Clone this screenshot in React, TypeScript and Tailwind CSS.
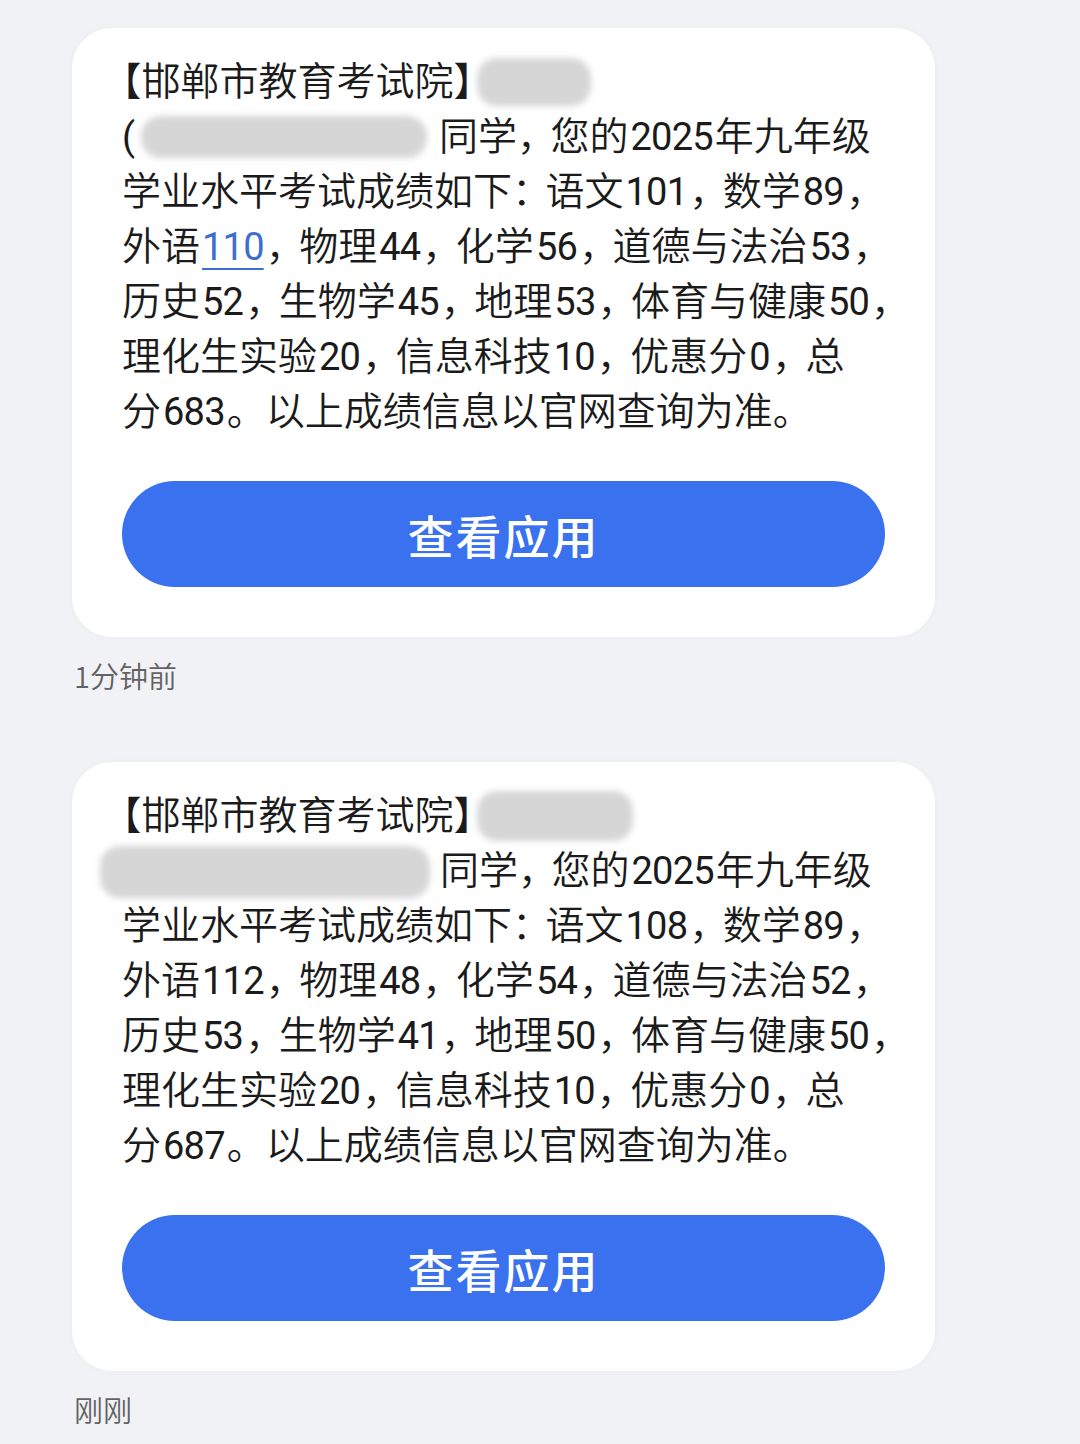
import React from 'react';

// digit runs get the latin face, full-width punctuation uses half-width glyphs plus a gap
const T: React.FC<{ s: string }> = ({ s }) => (
  <>
    {s.split(/(\d+|[，：])/).map((part, i) => {
      if (/^\d+$/.test(part))
        return (
          <span key={i} className="mx-[2px] font-['Roboto'] text-[38px] font-normal tracking-[-0.8px]">
            {part}
          </span>
        );
      if (part === '，' || part === '：')
        return (
          <span key={i} className="mr-[14px] [font-feature-settings:'halt']">
            {part}
          </span>
        );
      return <span key={i}>{part}</span>;
    })}
  </>
);

const Blob: React.FC<{ className: string }> = ({ className }) => (
  <span className={`inline-block rounded-[20px] bg-[#d6d6d6] align-middle blur-[3px] ${className}`} />
);

const MessageCard: React.FC<{ lines: React.ReactNode[]; time: string }> = ({ lines, time }) => (
  <div>
    <div className="mx-[72px] w-[863px] rounded-[40px] bg-white px-[50px] pb-[50px] pt-[23px] shadow-[0_0_6px_rgba(0,0,0,0.03)]">
      <div className="text-[39px] leading-[55px] text-[#1b1b1b]">
        {lines.map((line, i) => (
          <div key={i} className="h-[55px] whitespace-nowrap">
            {line}
          </div>
        ))}
      </div>
      <button className="mt-[45px] flex h-[106px] w-full items-center justify-center rounded-full bg-[#3a71ef] text-[46px] font-medium tracking-[2px] text-white">
        查看应用
      </button>
    </div>
    <div className="ml-[74px] mt-[20px] text-[29px] leading-[36px] text-[#626262]">{time}</div>
  </div>
);

const Header: React.FC<{ blob: string }> = ({ blob }) => (
  <>
    <span className="[font-feature-settings:'halt']">【</span>
    邯郸市教育考试院
    <span className="[font-feature-settings:'halt']">】</span>
    <Blob className={blob} />
  </>
);

const first: React.ReactNode[] = [
  <Header blob="ml-[4px] -mt-[4px] h-[48px] w-[114px]" />,
  <>
    <span className="font-['Roboto'] text-[38px] font-normal">(</span>
    <Blob className="-mt-[4px] ml-[6px] mr-[12px] h-[42px] w-[286px]" />
    <T s="同学，您的2025年九年级" />
  </>,
  <T s="学业水平考试成绩如下：语文101，数学89，" />,
  <>
    <T s="外语" />
    <span className="mx-[2px] font-['Roboto'] text-[38px] font-normal tracking-[-0.8px] text-[#3c6ed2] underline decoration-[2px] underline-offset-[8px]">
      110
    </span>
    <T s="，物理44，化学56，道德与法治53，" />
  </>,
  <T s="历史52，生物学45，地理53，体育与健康50，" />,
  <T s="理化生实验20，信息科技10，优惠分0，总" />,
  <T s="分683。以上成绩信息以官网查询为准。" />,
];

const second: React.ReactNode[] = [
  <Header blob="ml-[4px] -mt-[4px] h-[50px] w-[156px]" />,
  <>
    <Blob className="-ml-[22px] -mt-[2px] mr-[10px] h-[52px] w-[330px]" />
    <T s="同学，您的2025年九年级" />
  </>,
  <T s="学业水平考试成绩如下：语文108，数学89，" />,
  <T s="外语112，物理48，化学54，道德与法治52，" />,
  <T s="历史53，生物学41，地理50，体育与健康50，" />,
  <T s="理化生实验20，信息科技10，优惠分0，总" />,
  <T s="分687。以上成绩信息以官网查询为准。" />,
];

export default function App() {
  return (
    <div
      className="min-h-[1444px] w-[1080px] overflow-hidden bg-[#f1f2f6] pt-[28px] font-[350]"
      style={{ fontFamily: '"Noto Sans CJK SC", "Noto Sans", sans-serif' }}
    >
      <MessageCard lines={first} time="1分钟前" />
      <div className="h-[69px]" />
      <MessageCard lines={second} time="刚刚" />
    </div>
  );
}
